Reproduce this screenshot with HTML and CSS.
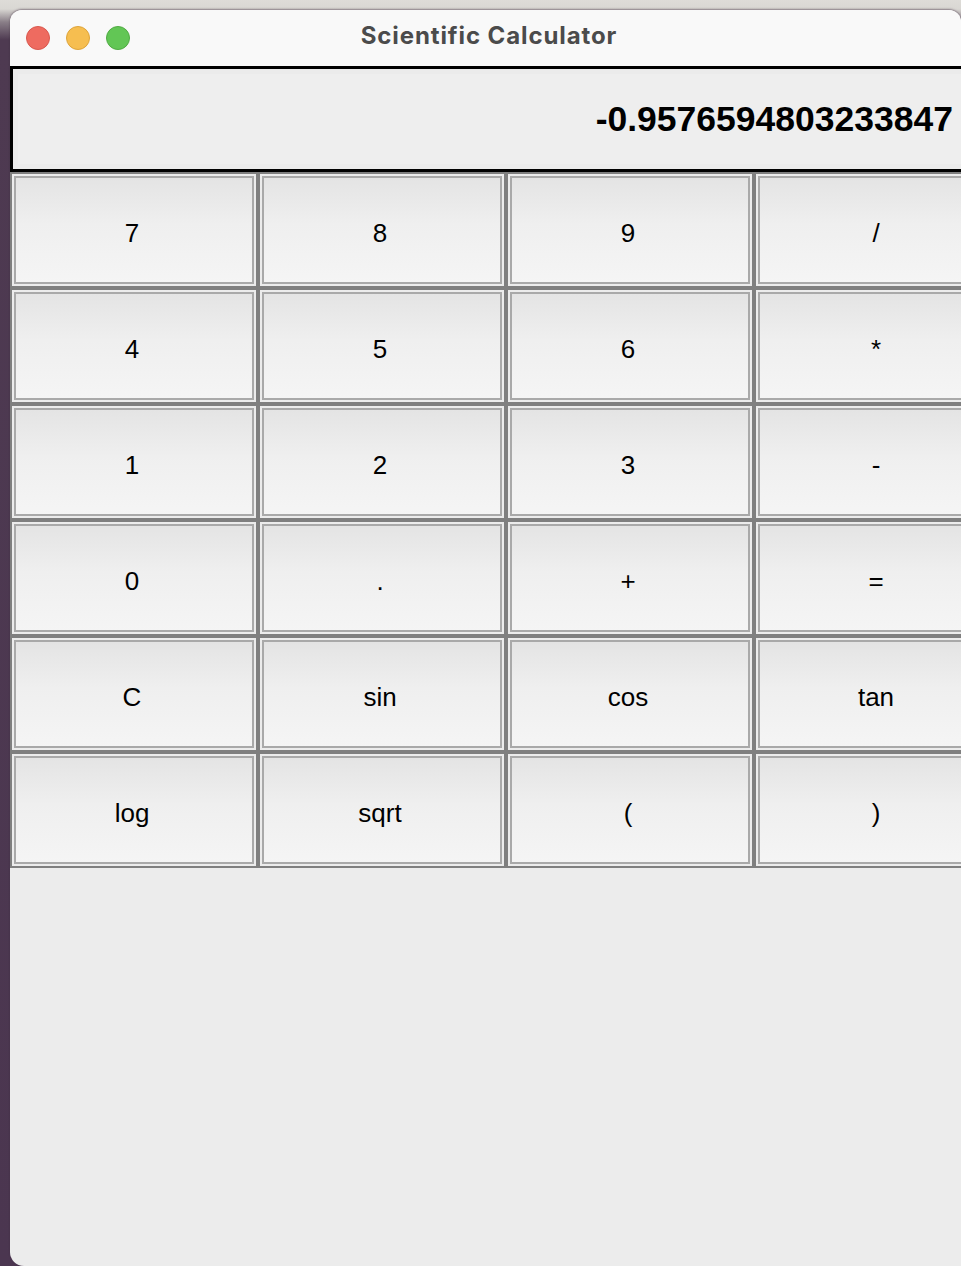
FILE: index.html
```html
<!DOCTYPE html>
<html>
<head>
<meta charset="utf-8">
<title>Scientific Calculator</title>
<link rel="stylesheet" href="styles.css">
</head>
<body>
<div class="window">
  <div class="titlebar">
    <div class="lights">
      <span class="light red"></span>
      <span class="light yellow"></span>
      <span class="light green"></span>
    </div>
    <div class="title">Scientific Calculator</div>
    <div></div>
  </div>
  <div class="content">
    <div class="display">-0.9576594803233847</div>
    <div class="keys">
      <button class="key">7</button>
      <button class="key">8</button>
      <button class="key">9</button>
      <button class="key">/</button>
      <button class="key">4</button>
      <button class="key">5</button>
      <button class="key">6</button>
      <button class="key">*</button>
      <button class="key">1</button>
      <button class="key">2</button>
      <button class="key">3</button>
      <button class="key">-</button>
      <button class="key">0</button>
      <button class="key">.</button>
      <button class="key">+</button>
      <button class="key">=</button>
      <button class="key">C</button>
      <button class="key">sin</button>
      <button class="key">cos</button>
      <button class="key">tan</button>
      <button class="key">log</button>
      <button class="key">sqrt</button>
      <button class="key">(</button>
      <button class="key">)</button>
    </div>
  </div>
</div>
</body>
</html>
```

FILE: styles.css
```css
html, body {
  margin: 0;
  padding: 0;
  height: 1266px;
  overflow: hidden;
}
body {
  background: linear-gradient(to bottom, #dedcd8 0, #d9d7d3 9px, #8a7f88 22px, #4e3a51 40px, #4b3650 100%);
  padding: 10px 0 0 10px;
  box-sizing: border-box;
}
.window {
  width: 951px;
  height: 1256px;
  background: #ececec;
  border-radius: 12px 12px 0 14px;
  overflow: hidden;
  box-shadow: 0 -1px 2px rgba(60, 40, 60, 0.5);
  display: flex;
  flex-direction: column;
}
.titlebar {
  height: 56px;
  flex: none;
  background: #f9f9f9;
  display: grid;
  grid-template-columns: 1fr auto 1fr;
  align-items: center;
}
.lights {
  display: flex;
  gap: 16px;
  padding-left: 16px;
  padding-top: 0;
}
.light {
  width: 24px;
  height: 24px;
  border-radius: 50%;
  box-sizing: border-box;
}
.red { background: #ee6b60; border: 1px solid #d9584e; }
.yellow { background: #f6be50; border: 1px solid #dea43a; }
.green { background: #62c655; border: 1px solid #50ab43; }
.title {
  font-family: Inter, "Liberation Sans", sans-serif;
  font-weight: 700;
  font-size: 24px;
  line-height: 28px;
  color: #4b4b4b;
  letter-spacing: 0.9px;
  padding-left: 7px;
  padding-bottom: 4px;
}
.content {
  width: 992px;
  flex: none;
}
.display {
  height: 100px;
  border: 3px solid #000;
  background: #eeeeee;
  box-shadow: inset 0 0 0 5px #ebebeb;
  box-sizing: content-box;
  display: flex;
  align-items: center;
  justify-content: flex-end;
  padding-right: 46px;
  font-family: "Liberation Sans", Arial, sans-serif;
  font-weight: 700;
  font-size: 35.5px;
  color: #000;
  letter-spacing: 0;
}
.keys {
  display: grid;
  grid-template-columns: repeat(4, 248px);
  grid-auto-rows: 116px;
}
.key {
  margin: 0;
  border: 2px solid #7f7f7f;
  background: linear-gradient(to bottom, #e3e3e3 0%, #efefef 45%, #f5f5f5 100%);
  box-shadow: inset 0 0 0 2px #ececec, inset 0 0 0 4px #a9a9a9;
  font-family: "Liberation Sans", Arial, sans-serif;
  font-size: 26px;
  color: #000;
  display: flex;
  align-items: center;
  justify-content: center;
  padding: 6px 4px 0 0;
}
```
